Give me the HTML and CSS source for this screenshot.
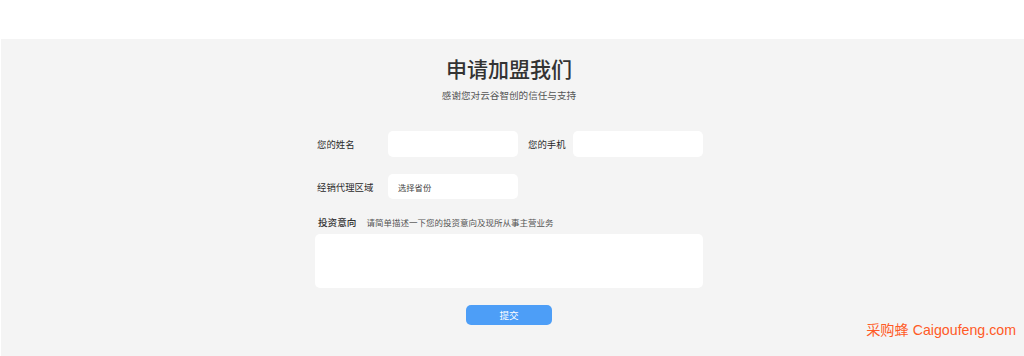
FILE: index.html
```html
<!DOCTYPE html>
<html lang="zh-CN">
<head>
  <meta charset="UTF-8">
  <title>申请加盟我们</title>
  <meta name="viewport" content="width=device-width, initial-scale=1.0">
  <link rel="stylesheet" href="styles.css">
</head>
<body>
  <div class="top-strip"></div>

  <section class="join">
    <h1 class="join-title">申请加盟我们</h1>
    <p class="join-sub">感谢您对云谷智创的信任与支持</p>

    <form class="join-form" onsubmit="return false;">
      <div class="form-row">
        <label class="field-label label-wide" for="name">您的姓名</label>
        <input class="field" type="text" id="name">
        <label class="field-label label-phone" for="phone">您的手机</label>
        <input class="field" type="text" id="phone">
      </div>

      <div class="form-row row-area">
        <label class="field-label label-wide" for="area">经销代理区域</label>
        <div class="field select-field" id="area">选择省份</div>
      </div>

      <div class="intent-head">
        <span class="intent-label">投资意向</span>
        <span class="intent-hint">请简单描述一下您的投资意向及现所从事主营业务</span>
      </div>
      <textarea class="intent-box"></textarea>

      <div class="submit-row">
        <button class="submit-btn" type="submit">提交</button>
      </div>
    </form>

    <div class="watermark">采购蜂 Caigoufeng.com</div>
  </section>
</body>
</html>
```

FILE: styles.css
```css
body {
  margin: 0;
  font-family: "Noto Sans CJK SC", "Noto Sans", sans-serif;
  color: #333;
  background: #fff;
}

.top-strip {
  height: 39px;
  background: #fff;
}

.join {
  position: relative;
  height: 317px;
  margin-left: 1px;
  padding: 15px 7px 0 0;
  box-sizing: border-box;
  background: #f4f4f4;
}

.join-title {
  margin: 0;
  font-size: 21px;
  line-height: 28px;
  font-weight: 500;
  text-align: center;
  color: #333;
}

.join-sub {
  margin: 6px 0 0;
  font-size: 9.6px;
  line-height: 14px;
  text-align: center;
  color: #555;
}

.join-form {
  width: 388px;
  margin: 29px auto 0;
}

.form-row {
  display: flex;
  align-items: center;
  height: 26px;
}

.row-area {
  margin-top: 17px;
  height: 25px;
}

.field-label {
  font-size: 9.4px;
  font-weight: 400;
  color: #2a2a2a;
  box-sizing: border-box;
}

.label-wide {
  width: 73px;
  padding-left: 2px;
}

.label-phone {
  width: 55px;
  padding-left: 10px;
}

.field {
  width: 130px;
  height: 100%;
  border: none;
  border-radius: 5px;
  background: #fff;
  box-sizing: border-box;
  outline: none;
}

.select-field {
  display: flex;
  align-items: center;
  padding-left: 10px;
  font-size: 8.3px;
  color: #444;
}

.intent-head {
  display: flex;
  align-items: center;
  gap: 10px;
  margin-top: 16px;
  height: 14px;
  padding-left: 3px;
}

.intent-label {
  font-size: 9.6px;
  font-weight: 500;
  color: #333;
}

.intent-hint {
  font-size: 8.5px;
  color: #555;
}

.intent-box {
  display: block;
  width: 100%;
  height: 54px;
  margin-top: 5px;
  border: none;
  border-radius: 5px;
  background: #fff;
  box-sizing: border-box;
  resize: none;
  outline: none;
}

.submit-row {
  display: flex;
  justify-content: center;
  margin-top: 17px;
}

.submit-btn {
  width: 86px;
  height: 20px;
  padding: 0;
  border: none;
  border-radius: 5px;
  background: #4d9ef7;
  color: #fff;
  font-family: inherit;
  font-size: 9.6px;
  cursor: pointer;
}

.watermark {
  position: absolute;
  right: 8px;
  bottom: 17px;
  font-family: "Liberation Sans", "Noto Sans CJK SC", sans-serif;
  font-size: 14.2px;
  color: #ff5a26;
}
```
